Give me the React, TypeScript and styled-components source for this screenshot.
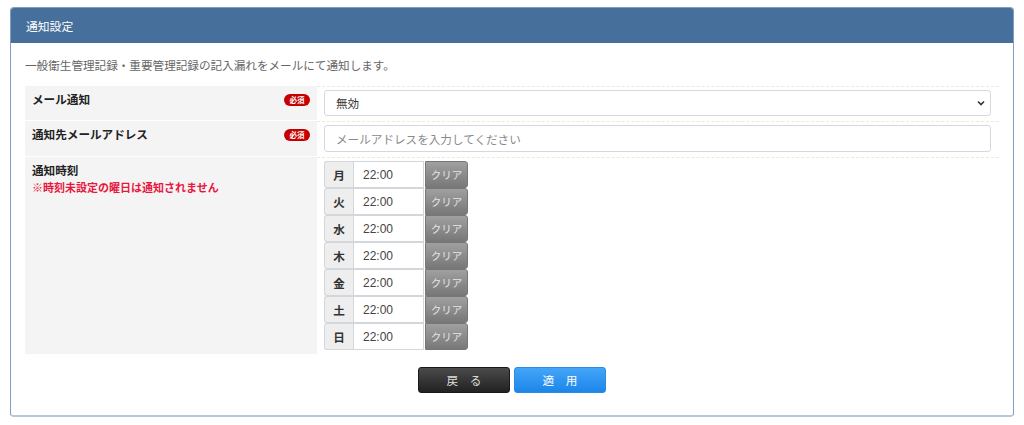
import React from "react";
import styled, { createGlobalStyle } from "styled-components";

const days = ["月", "火", "水", "木", "金", "土", "日"];

const GlobalStyle = createGlobalStyle`
  body {
    margin: 0;
    background: #fff;
    font-family: "Noto Sans CJK JP", "Noto Sans", sans-serif;
    color: #333;
  }
`;

const App = () => {
  return (
    <>
      <GlobalStyle />
      <Panel>
        <Header>通知設定</Header>
        <Body>
          <Description>一般衛生管理記録・重要管理記録の記入漏れをメールにて通知します。</Description>
          <Table>
            <Row>
              <LabelCell>
                <LabelText>メール通知</LabelText>
                <Required>必須</Required>
              </LabelCell>
              <ValueCell>
                <Select>
                  <span>無効</span>
                  <svg width="10" height="8" viewBox="0 0 10 8">
                    <path d="M2 2.5 L5 5.5 L8 2.5" stroke="#333" strokeWidth="1.6" fill="none" />
                  </svg>
                </Select>
              </ValueCell>
            </Row>
            <Row>
              <LabelCell>
                <LabelText>通知先メールアドレス</LabelText>
                <Required>必須</Required>
              </LabelCell>
              <ValueCell>
                <TextInput placeholder="メールアドレスを入力してください" />
              </ValueCell>
            </Row>
            <Row $last>
              <LabelCell>
                <div>
                  <LabelText>通知時刻</LabelText>
                  <Note>※時刻未設定の曜日は通知されません</Note>
                </div>
              </LabelCell>
              <ValueCell>
                <TimeList>
                  {days.map((d) => (
                    <TimeRow key={d}>
                      <Day>{d}</Day>
                      <Time>22:00</Time>
                      <ClearButton>クリア</ClearButton>
                    </TimeRow>
                  ))}
                </TimeList>
              </ValueCell>
            </Row>
          </Table>
          <Actions>
            <ActionButton $variant="back">戻　る</ActionButton>
            <ActionButton $variant="apply">適　用</ActionButton>
          </Actions>
        </Body>
      </Panel>
    </>
  );
};

export default App;

const Panel = styled.div`
  margin: 7px 10px 0;
  width: 1004px;
  box-sizing: border-box;
  border: 1px solid #7f9ebe;
  border-bottom: 2px solid #b7c7d8;
  border-radius: 4px;
  overflow: hidden;
`;

const Header = styled.div`
  height: 35px;
  display: flex;
  align-items: center;
  padding-left: 15px;
  background: #466f9b;
  color: #fff;
  font-size: 11.8px;
`;

const Body = styled.div`
  padding: 12px 14px 22px;
`;

const Description = styled.p`
  margin: 0 0 11px;
  line-height: 20px;
  font-size: 11.6px;
  color: #666;
`;

const Table = styled.div`
  display: flex;
  flex-direction: column;
`;

const Row = styled.div<{ $last?: boolean }>`
  display: grid;
  grid-template-columns: 292px 1fr;
  border-bottom: 1px solid #fff;
  ${({ $last }) => ($last ? "border-bottom: none;" : "")}
`;

const LabelCell = styled.div`
  background: #f4f4f4;
  display: flex;
  justify-content: space-between;
  align-items: flex-start;
  padding: 4px 7px 4px 7px;
`;

const LabelText = styled.div`
  font-size: 11.6px;
  font-weight: bold;
  color: #222;
  line-height: 18px;
`;

const Note = styled.div`
  font-size: 11px;
  font-weight: bold;
  color: #e8173f;
  line-height: 16px;
`;

const Required = styled.span`
  margin-top: 4px;
  width: 26px;
  height: 12px;
  border-radius: 6px;
  background: #c60000;
  color: #fff;
  font-size: 7.5px;
  font-weight: bold;
  display: flex;
  align-items: center;
  justify-content: center;
  line-height: 1;
`;

const ValueCell = styled.div`
  padding: 3px 8px 4px 7px;
  border-top: 1px dashed #efe9d6;
`;

const Select = styled.div`
  height: 26px;
  box-sizing: border-box;
  border: 1px solid #d5d9de;
  border-radius: 3px;
  display: flex;
  align-items: center;
  justify-content: space-between;
  padding: 0 4px 0 11px;
  font-size: 11.6px;
  color: #333;
  background: #fff;
`;

const TextInput = styled.input`
  display: block;
  width: 100%;
  height: 27px;
  box-sizing: border-box;
  border: 1px solid #d5d9de;
  border-radius: 3px;
  padding: 0 11px;
  font-family: "Noto Sans CJK JP", sans-serif;
  font-size: 11.6px;
  color: #333;
  outline: none;
  &::placeholder {
    color: #8a8a8a;
  }
`;

const TimeList = styled.div`
  display: flex;
  flex-direction: column;
`;

const TimeRow = styled.div`
  display: flex;
  height: 27px;
`;

const Day = styled.div`
  width: 29px;
  box-sizing: border-box;
  border: 1px solid #d3d6da;
  border-right: none;
  border-radius: 3px 0 0 3px;
  background: #eeeeee;
  display: flex;
  align-items: center;
  justify-content: center;
  font-size: 11.6px;
  font-weight: bold;
  color: #333;
`;

const Time = styled.div`
  width: 71px;
  box-sizing: border-box;
  border: 1px solid #d3d6da;
  display: flex;
  align-items: center;
  padding-left: 9px;
  font-family: "Liberation Sans", sans-serif;
  font-size: 12px;
  color: #444;
  background: #fff;
`;

const ClearButton = styled.div`
  width: 43px;
  margin-left: 1px;
  box-sizing: border-box;
  border: 1px solid #777;
  border-radius: 0 3px 3px 0;
  background: linear-gradient(#a0a0a0, #787878);
  display: flex;
  align-items: center;
  justify-content: center;
  font-size: 10.5px;
  color: #e4e4e4;
`;

const Actions = styled.div`
  display: flex;
  justify-content: center;
  gap: 4px;
  margin-top: 13px;
`;

const ActionButton = styled.div<{ $variant: "back" | "apply" }>`
  width: 92px;
  height: 26px;
  box-sizing: border-box;
  border-radius: 3px;
  display: flex;
  align-items: center;
  justify-content: center;
  font-size: 11.6px;
  color: ${({ $variant }) => ($variant === "back" ? "#ddd" : "#fff")};
  border: 1px solid ${({ $variant }) => ($variant === "back" ? "#1a1a1a" : "#2b8be6")};
  background: ${({ $variant }) =>
    $variant === "back"
      ? "linear-gradient(#4a4a4a, #222)"
      : "linear-gradient(#45a5f7, #1b86ea)"};
`;
